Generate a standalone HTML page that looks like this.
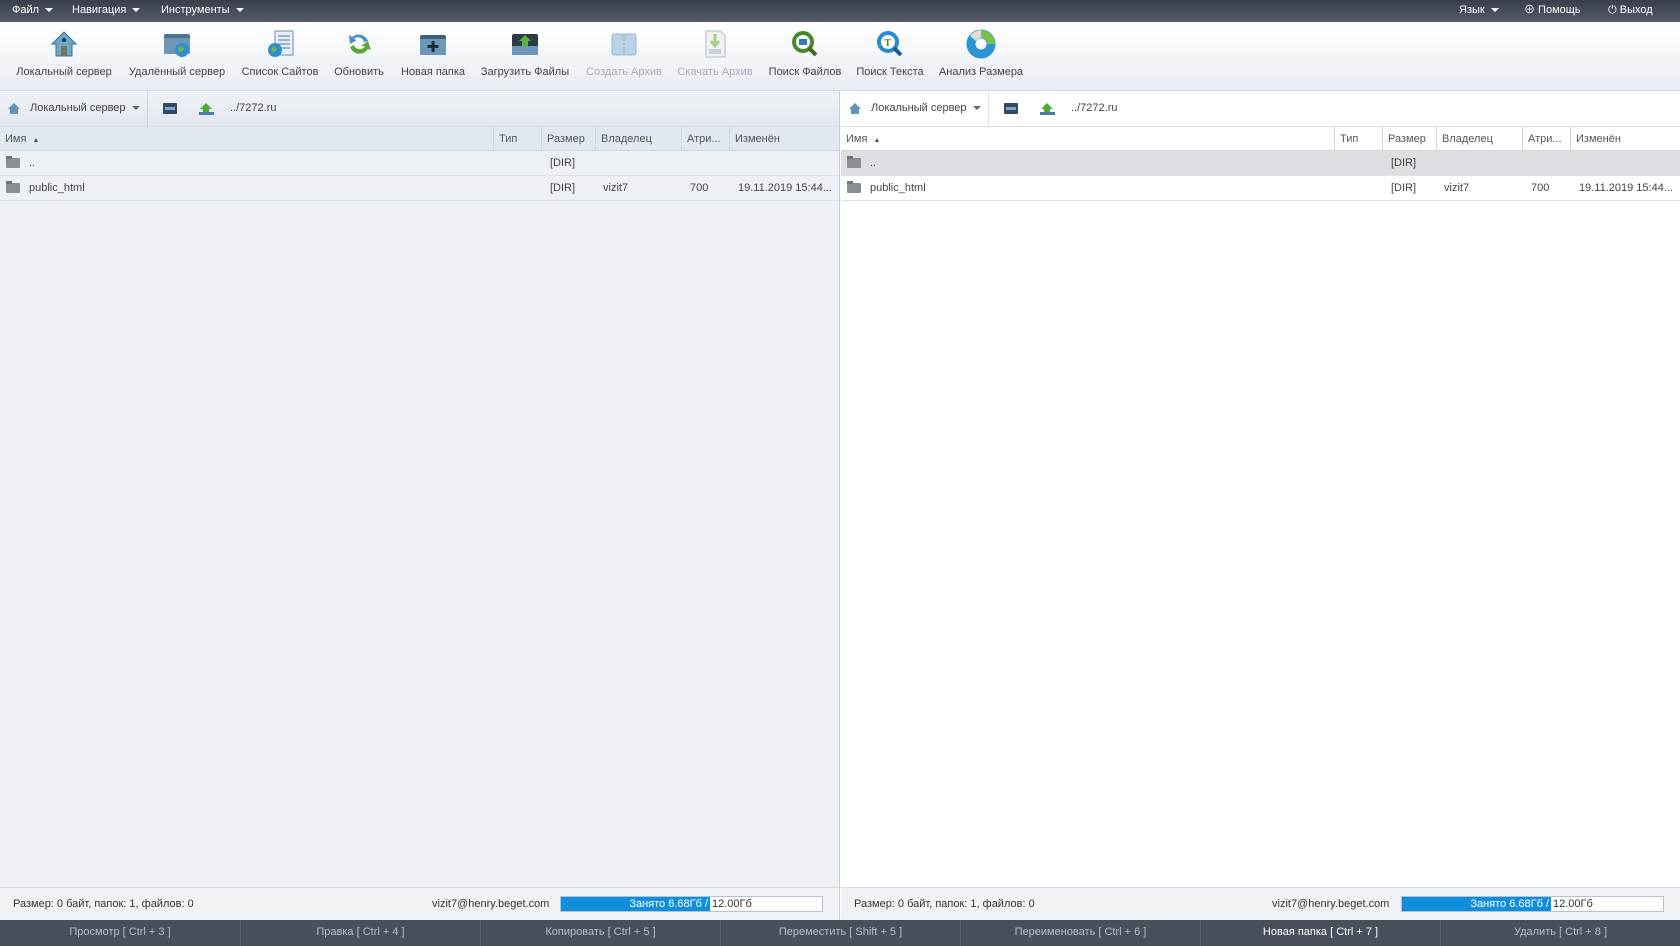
<!DOCTYPE html>
<html><head><meta charset="utf-8"><style>
*{box-sizing:border-box;margin:0;padding:0}
body{width:1680px;height:946px;overflow:hidden;font-family:"Liberation Sans","Noto Sans CJK SC",sans-serif;font-size:11px;color:#333;background:#fff;position:relative}
.abs{position:absolute}
#menu{left:0;top:0;width:1680px;height:22px;background:linear-gradient(#3b3f4c,#545a68);color:#fff;font-size:11px}
#menu span{position:absolute;top:4px;line-height:13px;white-space:nowrap}
.tri{display:inline-block;width:0;height:0;border-left:4px solid transparent;border-right:4px solid transparent;border-top:4px solid currentColor;margin-left:6px;vertical-align:middle}
#tb{left:0;top:22px;width:1680px;height:69px;background:linear-gradient(#fff,#e8edf3);border-bottom:1px solid #d3d8de}
.ti{position:absolute;top:0;width:120px;margin-left:-60px;text-align:center}
.ti .ic{width:30px;height:30px;margin:7px auto 0;position:relative}
.ti .lb{position:absolute;top:44px;left:0;width:120px;text-align:center;color:#444;font-size:11px}
.dis .lb{color:#aab}
.pane{top:91px;height:829px}
.pb{position:absolute;left:0;top:0;right:0;height:36px;border-bottom:1px solid #d8dde3}
.hd{position:absolute;left:0;top:36px;right:0;height:24px;background:#e2e8ef;border-bottom:1px solid #cfd5dc;color:#555}
.hd div{position:absolute;top:0;height:24px;line-height:24px;padding-left:5px;border-left:1px solid #d0d6dd}
.row{position:absolute;left:0;right:0;height:25px;border-bottom:1px solid #dde2e8;color:#444}
.row div{position:absolute;top:0;line-height:24px}
.fold{position:absolute;left:6px;top:7px;width:14px;height:10px;background:#8a8f96;border-radius:1px}
.fold:before{content:"";position:absolute;left:0;top:-2px;width:6px;height:3px;background:#6f747b}
.st{position:absolute;left:0;right:0;bottom:0;height:33px;background:#f0f2f5;border-top:1px solid #d5dae0;color:#333}
.st span{position:absolute;top:10px;white-space:nowrap}
.bar{position:absolute;top:8px;width:263px;height:16px;border:1px solid #b6c2cf;background:#fff;white-space:nowrap}
.bar i{position:absolute;left:0;top:0;bottom:0;width:149px;background:#118fdc}
.bar .a{position:absolute;right:114px;top:1px;color:#fff;line-height:13px}
.bar .b{position:absolute;left:151px;top:1px;color:#333;line-height:13px}
#bb{left:0;top:920px;width:1680px;height:26px;background:#4a4f5c;color:#b8bcc5}
#bb div{position:absolute;top:0;height:26px;line-height:24px;text-align:center;width:240px;border-left:1px solid #5b606c;white-space:nowrap}
</style></head><body>
<div id="menu" class="abs">
<span style="left:12px">Файл<i class="tri"></i></span>
<span style="left:72px">Навигация<i class="tri"></i></span>
<span style="left:161px">Инструменты<i class="tri"></i></span>
<span style="left:1459px">Язык<i class="tri"></i></span>
<span style="left:1524px">⊕ Помощь</span>
<span style="left:1608px">⏻ Выход</span>
</div>
<div id="tb" class="abs">
<div class="ti" style="left:64px"><div class="ic"><svg width="30" height="30"><path d="M15 3 L3 15 H7 V27 H23 V15 H27 Z" fill="#6ea6c8" stroke="#3c6e90"/><rect x="12" y="17" width="6" height="10" fill="#6b7a55"/><circle cx="15" cy="11" r="2" fill="#234"/></svg></div><div class="lb">Локальный сервер</div></div>
<div class="ti" style="left:177px"><div class="ic"><svg width="30" height="30"><rect x="2" y="5" width="26" height="20" rx="2" fill="#4e7390"/><rect x="2" y="9" width="26" height="16" fill="#6d97b8"/><circle cx="20" cy="21" r="7" fill="#2f8fd0"/><path d="M16 18 Q20 16 22 20 Q19 24 17 23Z" fill="#67b84a"/></svg></div><div class="lb">Удалённый сервер</div></div>
<div class="ti" style="left:280px"><div class="ic"><svg width="30" height="30"><rect x="10" y="2" width="18" height="24" fill="#e8eef5" stroke="#6b8fb0"/><path d="M13 7h12M13 11h12M13 15h12M13 19h12" stroke="#4a78a8"/><circle cx="10" cy="21" r="7" fill="#2f8fd0"/><path d="M6 19 Q10 16 12 20 Q9 24 7 23Z" fill="#67b84a"/></svg></div><div class="lb">Список Сайтов</div></div>
<div class="ti" style="left:359px"><div class="ic"><svg width="30" height="30"><path d="M6 18 A10 10 0 0 0 24 20 L27 21 L24 12 L17 17 L21 17 A6 6 0 0 1 10 16Z" fill="#5aa83a"/><path d="M24 12 A10 10 0 0 0 8 8 L5 6 L6 15 L13 11 L10 10 A6 6 0 0 1 20 13Z" fill="#4a90c8"/></svg></div><div class="lb">Обновить</div></div>
<div class="ti" style="left:433px"><div class="ic"><svg width="30" height="30"><rect x="2" y="6" width="26" height="20" rx="2" fill="#3e5f78"/><rect x="2" y="10" width="26" height="16" fill="#6d97b8"/><path d="M15 12v11M9.5 17.5h11" stroke="#1d2d3a" stroke-width="3"/></svg></div><div class="lb">Новая папка</div></div>
<div class="ti" style="left:525px"><div class="ic"><svg width="30" height="30"><rect x="2" y="5" width="26" height="21" rx="2" fill="#2d3b45"/><rect x="2" y="17" width="26" height="9" fill="#6d97b8"/><path d="M15 6 L9 12 H12 V17 H18 V12 H21Z" fill="#5ab43a"/></svg></div><div class="lb">Загрузить Файлы</div></div>
<div class="ti dis" style="left:624px"><div class="ic"><svg width="30" height="30"><rect x="3" y="5" width="24" height="21" rx="2" fill="#b9d2e6" stroke="#9bb8d0"/><path d="M15 6v18" stroke="#8aa6bd" stroke-dasharray="2 2"/></svg></div><div class="lb">Создать Архив</div></div>
<div class="ti dis" style="left:715px"><div class="ic"><svg width="30" height="30"><path d="M6 2h14l5 5v21H6Z" fill="#eef2f5" stroke="#b0bcc8"/><path d="M15 5v10M11 12l4 5 4-5" stroke="#a8cf8a" stroke-width="3" fill="none"/><rect x="9" y="20" width="12" height="5" fill="#c5d0da"/></svg></div><div class="lb">Скачать Архив</div></div>
<div class="ti" style="left:805px"><div class="ic"><svg width="30" height="30"><circle cx="13" cy="13" r="9" fill="#fff" stroke="#4a8a2a" stroke-width="4"/><path d="M19 19l7 7" stroke="#3a6a1a" stroke-width="4"/><rect x="9" y="10" width="8" height="6" fill="#2f7ab8"/></svg></div><div class="lb">Поиск Файлов</div></div>
<div class="ti" style="left:890px"><div class="ic"><svg width="30" height="30"><circle cx="13" cy="13" r="9" fill="#fff" stroke="#2a8ad0" stroke-width="4"/><path d="M19 19l7 7" stroke="#1a5a98" stroke-width="4"/><text x="9" y="17" font-size="11" font-family="Liberation Serif" font-weight="bold" fill="#5a8a2a">T</text></svg></div><div class="lb">Поиск Текста</div></div>
<div class="ti" style="left:981px"><div class="ic"><svg width="30" height="30"><circle cx="15" cy="15" r="10" fill="none" stroke="#2a94d4" stroke-width="9"/><path d="M15 1 A14 14 0 0 1 29 15 H21 A6 6 0 0 0 15 9Z" fill="#7cc04a"/><path d="M4 7 A14 14 0 0 1 15 1 V9 A6 6 0 0 0 10 12Z" fill="#ddd"/></svg></div><div class="lb">Анализ Размера</div></div>
</div>

<div class="abs pane" style="left:0;width:840px;background:#edf1f6;border-right:1px solid #c8ced5">
<div class="pb" style="background:linear-gradient(#eef2f6,#e3e8ee)">
<svg class="abs" style="left:7px;top:11px" width="14" height="13"><path d="M7 1L1 7h2v5h8V7h2Z" fill="#5d95bc"/></svg>
<span class="abs" style="left:30px;top:11px;color:#444">Локальный сервер<i class="tri" style="color:#666"></i></span>
<div class="abs" style="left:147px;top:0;width:1px;height:36px;background:#cdd3da"></div>
<svg class="abs" style="left:163px;top:12px" width="14" height="11"><rect width="14" height="11" rx="1" fill="#2f4a62"/><rect x="2" y="4" width="10" height="3" fill="#7fa6c6"/></svg>
<svg class="abs" style="left:199px;top:11px" width="15" height="13"><path d="M7 1L1 7h3v3h6V7h3Z" fill="#4cae2c"/><rect x="0" y="10" width="15" height="3" fill="#4c7ea0"/></svg>
<span class="abs" style="left:230px;top:11px;color:#444">../7272.ru</span>
</div>
<div class="hd">
<div style="left:0;border:0">Имя &nbsp;<span style="font-size:7px">▲</span></div>
<div style="left:493px">Тип</div><div style="left:541px">Размер</div><div style="left:595px">Владелец</div><div style="left:681px">Атри...</div><div style="left:729px">Изменён</div>
</div>
<div class="row" style="top:60px"><span class="fold"></span><div style="left:29px">..</div><div style="left:550px">[DIR]</div></div>
<div class="row" style="top:85px"><span class="fold"></span><div style="left:29px">public_html</div><div style="left:550px">[DIR]</div><div style="left:603px">vizit7</div><div style="left:690px">700</div><div style="left:738px">19.11.2019 15:44...</div></div>
<div class="st"><span style="left:13px">Размер: 0 байт, папок: 1, файлов: 0</span><span style="left:432px">vizit7@henry.beget.com</span>
<div class="bar" style="left:560px"><i></i><span class="a">Занято 6.68Гб /</span><span class="b">12.00Гб</span></div></div>
</div>

<div class="abs pane" style="left:841px;width:839px;background:#fff">
<div class="pb" style="background:#fff">
<svg class="abs" style="left:7px;top:11px" width="14" height="13"><path d="M7 1L1 7h2v5h8V7h2Z" fill="#5d95bc"/></svg>
<span class="abs" style="left:30px;top:11px;color:#444">Локальный сервер<i class="tri" style="color:#666"></i></span>
<div class="abs" style="left:147px;top:0;width:1px;height:36px;background:#dde2e8"></div>
<svg class="abs" style="left:163px;top:12px" width="14" height="11"><rect width="14" height="11" rx="1" fill="#2f4a62"/><rect x="2" y="4" width="10" height="3" fill="#7fa6c6"/></svg>
<svg class="abs" style="left:199px;top:11px" width="15" height="13"><path d="M7 1L1 7h3v3h6V7h3Z" fill="#4cae2c"/><rect x="0" y="10" width="15" height="3" fill="#4c7ea0"/></svg>
<span class="abs" style="left:230px;top:11px;color:#444">../7272.ru</span>
</div>
<div class="hd" style="background:#fff">
<div style="left:0;border:0">Имя &nbsp;<span style="font-size:7px">▲</span></div>
<div style="left:493px">Тип</div><div style="left:541px">Размер</div><div style="left:595px">Владелец</div><div style="left:681px">Атри...</div><div style="left:729px">Изменён</div>
</div>
<div class="row" style="top:60px;background:#dcdee2"><span class="fold"></span><div style="left:29px">..</div><div style="left:550px">[DIR]</div></div>
<div class="row" style="top:85px"><span class="fold"></span><div style="left:29px">public_html</div><div style="left:550px">[DIR]</div><div style="left:603px">vizit7</div><div style="left:690px">700</div><div style="left:738px">19.11.2019 15:44...</div></div>
<div class="st"><span style="left:13px">Размер: 0 байт, папок: 1, файлов: 0</span><span style="left:431px">vizit7@henry.beget.com</span>
<div class="bar" style="left:560px"><i></i><span class="a">Занято 6.68Гб /</span><span class="b">12.00Гб</span></div></div>
</div>

<div id="bb" class="abs">
<div style="left:0;border:0">Просмотр [ Ctrl + 3 ]</div>
<div style="left:240px">Правка [ Ctrl + 4 ]</div>
<div style="left:480px">Копировать [ Ctrl + 5 ]</div>
<div style="left:720px">Переместить [ Shift + 5 ]</div>
<div style="left:960px">Переименовать [ Ctrl + 6 ]</div>
<div style="left:1200px;color:#fff">Новая папка [ Ctrl + 7 ]</div>
<div style="left:1440px">Удалить [ Ctrl + 8 ]</div>
</div>
</body></html>
